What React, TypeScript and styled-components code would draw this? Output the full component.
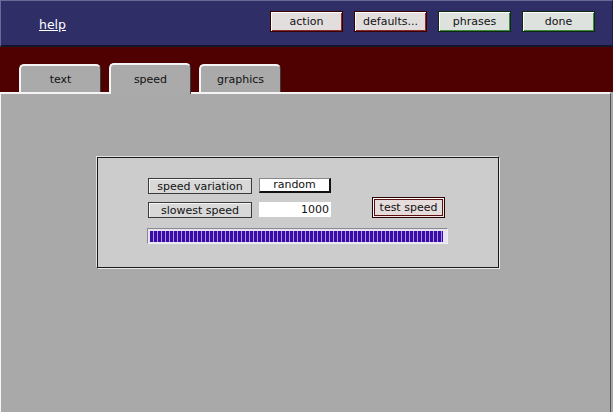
import React from 'react';
import styled, { createGlobalStyle } from 'styled-components';

const GlobalStyle = createGlobalStyle`
  html, body {
    margin: 0;
    padding: 0;
    background: #a9a9a9;
  }
  body {
    font-family: "DejaVu Sans", Verdana, sans-serif;
    font-size: 11px;
    color: #111;
  }
`;

const Window = styled.div`
  width: 613px;
  height: 412px;
  display: flex;
  flex-direction: column;
  overflow: hidden;
`;

const Header = styled.header`
  height: 47px;
  box-sizing: border-box;
  background: #2f2e66;
  border-top: 1px solid #6a6a98;
  border-left: 1px solid #6a6a98;
  border-right: 1px solid #1c1c40;
  border-bottom: 2px solid #14142e;
  display: flex;
  align-items: flex-start;
  padding: 0 17px 0 38px;
`;

const HelpLink = styled.a`
  color: #ffffff;
  font-size: 12.5px;
  text-decoration: underline;
  margin-top: 16px;
  cursor: pointer;
`;

const ButtonRow = styled.div`
  margin-left: auto;
  margin-top: 10px;
  display: flex;
  gap: 11px;
`;

const TopButton = styled.button<{ $tone: 'red' | 'green' }>`
  width: 73px;
  height: 21px;
  box-sizing: border-box;
  padding: 0;
  font-family: inherit;
  font-size: 11px;
  color: #111;
  background: ${(p) => (p.$tone === 'red' ? '#e2dede' : '#dee2de')};
  border: 1px solid ${(p) => (p.$tone === 'red' ? '#3a0000' : '#0c2a0c')};
  box-shadow: inset 1px 1px 0 #ffffff,
    inset -1px -1px 0 ${(p) => (p.$tone === 'red' ? '#8a2a2a' : '#3f8a3f')};
`;

const TabStrip = styled.nav`
  height: 45px;
  box-sizing: border-box;
  background: #4f0000;
  display: flex;
  align-items: flex-end;
  gap: 8px;
  padding-left: 19px;
`;

const Tab = styled.div<{ $active?: boolean }>`
  width: 82px;
  height: ${(p) => (p.$active ? '31px' : '28px')};
  margin-bottom: ${(p) => (p.$active ? '-2px' : '0')};
  box-sizing: border-box;
  background: #aaaaaa;
  border-top: 2px solid #f4f4f4;
  border-left: 2px solid #f4f4f4;
  border-right: 1px solid #3a3a3a;
  border-radius: 5px 5px 0 0;
  display: flex;
  align-items: ${(p) => (p.$active ? 'flex-start' : 'center')};
  padding-top: ${(p) => (p.$active ? '8px' : '0')};
  justify-content: center;
  position: relative;
  z-index: 1;
  color: #111;
`;

const Panel = styled.main`
  flex: 1;
  margin-right: 2px;
  box-sizing: border-box;
  background: #a9a9a9;
  border-top: 2px solid #f4f4f4;
  border-left: 1px solid #f4f4f4;
  border-right: 1px solid #505050;
  box-shadow: -1px 0 0 #6a6a6a;
  padding: 63px 0 0 96px;
`;

const SettingsBox = styled.section`
  width: 402px;
  height: 111px;
  box-sizing: border-box;
  background: #cccccc;
  border: 1px solid #1a1a1a;
  box-shadow: 1px 1px 0 #e8e8e8, -1px -1px 0 #e0e0e0;
  padding: 20px 0 0 50px;
  display: grid;
  grid-template-columns: 104px 73px auto;
  grid-template-rows: 16px 16px;
  column-gap: 7px;
  row-gap: 8px;
`;

const FieldButton = styled.button`
  width: 104px;
  height: 16px;
  box-sizing: border-box;
  padding: 0;
  font-family: inherit;
  font-size: 11px;
  color: #111;
  background: #d8d8d8;
  border: 1px solid #3a3a3a;
  box-shadow: inset 1px 1px 0 #f4f4f4;
`;

const ValueBox = styled.div<{ $align: 'center' | 'right'; $framed?: boolean }>`
  width: 72px;
  height: 15px;
  box-sizing: border-box;
  background: #ffffff;
  text-align: ${(p) => p.$align};
  line-height: ${(p) => (p.$framed ? '12px' : '15px')};
  padding-right: ${(p) => (p.$align === 'right' ? '2px' : '0')};
  border-top: ${(p) => (p.$framed ? '1px solid #888' : 'none')};
  border-left: ${(p) => (p.$framed ? '1px solid #888' : 'none')};
  border-right: ${(p) => (p.$framed ? '2px solid #111' : 'none')};
  border-bottom: ${(p) => (p.$framed ? '2px solid #111' : 'none')};
  color: #111;
`;

const TestButton = styled.button`
  grid-column: 3;
  grid-row: 1 / span 2;
  align-self: end;
  margin-left: 33px;
  margin-bottom: 0;
  width: 73px;
  height: 21px;
  box-sizing: border-box;
  padding: 0;
  font-family: inherit;
  font-size: 11px;
  color: #111;
  background: #e6dcdc;
  border: 1px solid #2a0000;
  box-shadow: inset 1px 1px 0 #ffffff, inset -1px -1px 0 #f0e6e6,
    inset 2px 2px 0 #5a1010, inset -2px -2px 0 #5a1010;
`;

const Meter = styled.div`
  grid-column: 1 / span 3;
  width: 301px;
  height: 16px;
  margin-top: 2px;
  margin-left: -1px;
  box-sizing: border-box;
  border: 1px solid #8a8a8a;
  border-right-color: #eeeeee;
  border-bottom-color: #eeeeee;
  background: #e6e4f4;
  padding: 2px 4px 1px 2px;
`;

const MeterFill = styled.div`
  height: 100%;
  background: repeating-linear-gradient(
    90deg,
    #3a0aa8 0,
    #3a0aa8 3px,
    #a898d8 3px,
    #a898d8 4px
  );
`;

export default function App() {
  return (
    <>
      <GlobalStyle />
      <Window>
        <Header>
          <HelpLink>help</HelpLink>
          <ButtonRow>
            <TopButton $tone="red">action</TopButton>
            <TopButton $tone="red">defaults...</TopButton>
            <TopButton $tone="green">phrases</TopButton>
            <TopButton $tone="green">done</TopButton>
          </ButtonRow>
        </Header>
        <TabStrip>
          <Tab>text</Tab>
          <Tab $active>speed</Tab>
          <Tab>graphics</Tab>
        </TabStrip>
        <Panel>
          <SettingsBox>
            <FieldButton>speed variation</FieldButton>
            <ValueBox $align="center" $framed>random</ValueBox>
            <TestButton>test speed</TestButton>
            <FieldButton>slowest speed</FieldButton>
            <ValueBox $align="right">1000</ValueBox>
            <Meter>
              <MeterFill />
            </Meter>
          </SettingsBox>
        </Panel>
      </Window>
    </>
  );
}
